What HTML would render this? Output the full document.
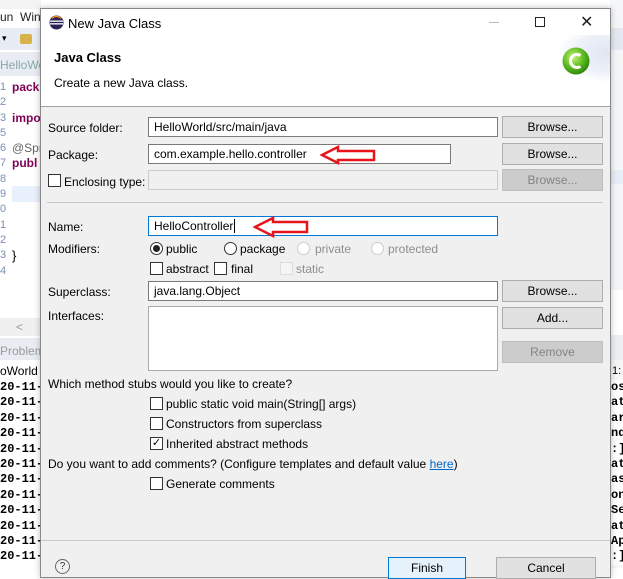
<!DOCTYPE html>
<html><head><style>
*{margin:0;padding:0;box-sizing:border-box}
body{width:623px;height:568px;overflow:hidden;background:#fff;font-family:"Liberation Sans",sans-serif;font-size:12px;color:#000;position:relative}
.a{position:absolute;white-space:nowrap}
.inp{position:absolute;background:#fff;border:1px solid #7a7a7a;height:20px;padding:2px 5px;font-size:12px}
.btn{position:absolute;background:#e1e1e1;border:1px solid #adadad;height:22px;text-align:center;line-height:20px;font-size:12px}
.dis{background:#cccccc;border-color:#bfbfbf;color:#838383}
.cb{position:absolute;width:13px;height:13px;border:1px solid #333;background:#fff}
.rb{position:absolute;width:13px;height:13px;border:1px solid #333;border-radius:50%;background:#fff}
.mono{font-family:"Liberation Mono",monospace;font-weight:bold;font-size:12px}
</style></head><body>
<!-- IDE background left -->
<div class="a" style="left:0;top:0;width:41px;height:9px;background:#f3f3f3"></div>
<div class="a" style="left:0;top:10px;color:#222">un&nbsp; Win</div>
<div class="a" style="left:0;top:28px;width:41px;height:22px;background:#e8edf5"></div>
<div class="a" style="left:2px;top:33px;font-size:9px">▾</div>
<div class="a" style="left:20px;top:34px;width:12px;height:10px;background:#d9b24a;border-radius:2px"></div>
<div class="a" style="left:0;top:52px;width:41px;height:24px;background:#e9ecf2"></div>
<div class="a" style="left:0;top:58px;color:#8aa">HelloWo</div>
<div class="a" style="left:0;top:78px;width:41px;height:240px;background:#fff"></div>
<div class="a" style="left:0;top:78px;width:10px;height:240px;background:#fff;color:#7a8fb5;font-size:11px;line-height:15.3px;padding-top:2px">1<br>2<br>3<br>5<br>6<br>7<br>8<br>9<br>0<br>1<br>2<br>3<br>4</div>
<div class="a" style="left:12px;top:186px;width:29px;height:16px;background:#e8f0fb"></div>
<div class="a" style="left:12px;top:80px;line-height:15.3px;font-size:12px;font-weight:bold;color:#7f0055">pack<br><br>impo<br><br><span style="color:#646464;font-weight:normal">@Spr</span><br>publ</div>
<div class="a" style="left:12px;top:248px;font-size:13px">}</div>
<div class="a" style="left:0;top:318px;width:41px;height:18px;background:#f0f0f0"></div>
<div class="a" style="left:16px;top:320px;color:#999">&lt;</div>
<div class="a" style="left:0;top:338px;width:41px;height:22px;background:#e9ecf2;color:#999;padding-top:6px">Problem</div>
<div class="a" style="left:0;top:364px;width:41px;color:#000">oWorld</div>
<div class="a mono" style="left:0;top:380px;line-height:15.4px">20-11-<br>20-11-<br>20-11-<br>20-11-<br>20-11-<br>20-11-<br>20-11-<br>20-11-<br>20-11-<br>20-11-<br>20-11-<br>20-11-</div>
<!-- IDE right strip -->
<div class="a" style="left:610px;top:0;width:13px;height:568px;background:#f5f6f8"></div>
<div class="a" style="left:610px;top:28px;width:13px;height:22px;background:#e4e8f0"></div>
<div class="a" style="left:610px;top:170px;width:13px;height:14px;background:#e8eef8"></div>
<div class="a" style="left:610px;top:290px;width:13px;height:45px;background:#fff"></div>
<div class="a" style="left:610px;top:335px;width:13px;height:25px;background:#eceef2"></div>
<div class="a" style="left:612px;top:365px;font-size:11px">1:</div>
<div class="a mono" style="left:611px;top:380px;line-height:15.4px;background:#fff">ost<br>atl<br>arc<br>nda<br>:]<br>at:<br>ask<br>ont<br>Ser<br>atl<br>App<br>:]</div>
<!-- Dialog -->
<div class="a" style="left:40px;top:8px;width:571px;height:570px;background:#f0f0f0;border:1px solid #888;box-shadow:0 0 6px rgba(0,0,0,.25)"></div>
<div class="a" style="left:41px;top:9px;width:569px;height:98px;background:#fff;border-bottom:1px solid #a0a0a0"></div>
<svg class="a" style="left:49px;top:15px" width="15" height="15" viewBox="0 0 15 15"><circle cx="7.5" cy="7.5" r="7" fill="#2c2255"/><rect x="1" y="5.5" width="13" height="1.3" fill="#fff"/><rect x="1" y="8.2" width="13" height="1.3" fill="#fff"/><path d="M3 3.5 A6 6 0 0 1 12 3.5" stroke="#f7941e" stroke-width="1.2" fill="none"/></svg>
<div class="a" style="left:68px;top:16px;font-size:13px">New Java Class</div>
<div class="a" style="left:489px;top:22px;width:10px;height:1px;background:#bbb"></div>
<div class="a" style="left:535px;top:17px;width:10px;height:10px;border:1px solid #222"></div>
<div class="a" style="left:580px;top:12px;font-size:16px;color:#222">✕</div>
<div class="a" style="left:54px;top:50px;font-weight:bold;font-size:13px">Java Class</div>
<div class="a" style="left:54px;top:76px">Create a new Java class.</div>
<div class="a" style="left:560px;top:35px;width:50px;height:46px;background:radial-gradient(ellipse at 100% 40%,#dfe5f3 0%,#eef1f8 50%,#fff 75%)"></div>
<svg class="a" style="left:561px;top:46px" width="30" height="30" viewBox="0 0 30 30"><defs><radialGradient id="g" cx="40%" cy="35%" r="65%"><stop offset="0" stop-color="#c8f27a"/><stop offset=".6" stop-color="#5cbb1f"/><stop offset="1" stop-color="#2f8a0c"/></radialGradient></defs><circle cx="15" cy="15" r="13.5" fill="url(#g)"/><path d="M19.5 9.5 A6.5 6.5 0 1 0 19.5 20.5" stroke="#fff" stroke-width="3" fill="none"/></svg>

<div class="a" style="left:48px;top:121px">Source folder:</div>
<div class="inp" style="left:148px;top:117px;width:350px">HelloWorld/src/main/java</div>
<div class="btn" style="left:502px;top:116px;width:101px">Browse...</div>
<div class="a" style="left:48px;top:148px">Package:</div>
<div class="inp" style="left:148px;top:144px;width:303px">com.example.hello.controller</div>
<div class="btn" style="left:502px;top:143px;width:101px">Browse...</div>
<div class="cb" style="left:48px;top:174px"></div>
<div class="a" style="left:64px;top:175px">Enclosing type:</div>
<div class="inp" style="left:148px;top:170px;width:350px;background:#f0f0f0;border-color:#ccc"></div>
<div class="btn dis" style="left:502px;top:169px;width:101px">Browse...</div>
<div class="a" style="left:47px;top:202px;width:556px;height:1px;background:#c8c8c8"></div>
<div class="a" style="left:48px;top:220px">Name:</div>
<div class="inp" style="left:148px;top:216px;width:350px;border-color:#0078d7">HelloController<span style="border-left:1px solid #000;margin-left:1px"></span></div>
<div class="a" style="left:48px;top:242px">Modifiers:</div>
<div class="rb" style="left:150px;top:242px"><div style="width:7px;height:7px;border-radius:50%;background:#222;margin:2px"></div></div>
<div class="a" style="left:166px;top:242px">public</div>
<div class="rb" style="left:224px;top:242px"></div>
<div class="a" style="left:240px;top:242px">package</div>
<div class="rb" style="left:297px;top:242px;border-color:#ccc"></div>
<div class="a" style="left:315px;top:242px;color:#8d8d8d">private</div>
<div class="rb" style="left:371px;top:242px;border-color:#ccc"></div>
<div class="a" style="left:388px;top:242px;color:#8d8d8d">protected</div>
<div class="cb" style="left:150px;top:262px"></div>
<div class="a" style="left:166px;top:262px">abstract</div>
<div class="cb" style="left:214px;top:262px"></div>
<div class="a" style="left:231px;top:262px">final</div>
<div class="cb" style="left:280px;top:262px;border-color:#ddd;background:#f5f5f5"></div>
<div class="a" style="left:296px;top:262px;color:#8d8d8d">static</div>
<div class="a" style="left:48px;top:285px">Superclass:</div>
<div class="inp" style="left:148px;top:281px;width:350px">java.lang.Object</div>
<div class="btn" style="left:502px;top:280px;width:101px">Browse...</div>
<div class="a" style="left:48px;top:309px">Interfaces:</div>
<div class="inp" style="left:148px;top:306px;width:350px;height:65px;border-color:#aaa"></div>
<div class="btn" style="left:502px;top:307px;width:101px">Add...</div>
<div class="btn dis" style="left:502px;top:341px;width:101px">Remove</div>
<div class="a" style="left:48px;top:377px">Which method stubs would you like to create?</div>
<div class="cb" style="left:150px;top:397px"></div>
<div class="a" style="left:166px;top:397px">public static void main(String[] args)</div>
<div class="cb" style="left:150px;top:417px"></div>
<div class="a" style="left:166px;top:417px">Constructors from superclass</div>
<div class="cb" style="left:150px;top:437px;font-size:11px;line-height:11px;text-align:center">✓</div>
<div class="a" style="left:166px;top:437px">Inherited abstract methods</div>
<div class="a" style="left:48px;top:457px">Do you want to add comments? (Configure templates and default value <span style="color:#0066cc;text-decoration:underline">here</span>)</div>
<div class="cb" style="left:150px;top:477px"></div>
<div class="a" style="left:166px;top:477px">Generate comments</div>
<div class="a" style="left:41px;top:540px;width:569px;height:1px;background:#c8c8c8"></div>
<div class="a" style="left:55px;top:559px;width:15px;height:15px;border:1px solid #666;border-radius:50%;font-size:10px;text-align:center;line-height:13px;color:#333">?</div>
<div class="btn" style="left:388px;top:557px;width:78px;border-color:#0078d7;background:#e5f1fb">Finish</div>
<div class="btn" style="left:496px;top:557px;width:100px">Cancel</div>
<!-- red arrows -->
<svg class="a" style="left:320px;top:145px" width="58" height="20" viewBox="0 0 58 20"><path d="M2 10 L18 2 L18 6 L54 6 L54 15 L18 15 L18 18 Z" fill="none" stroke="#e8141c" stroke-width="2.5" stroke-linejoin="miter"/></svg>
<svg class="a" style="left:253px;top:216px" width="58" height="22" viewBox="0 0 58 22"><path d="M2 11 L20 2 L20 6 L54 6 L54 16 L20 16 L20 20 Z" fill="none" stroke="#e8141c" stroke-width="2.5"/></svg>
</body></html>
